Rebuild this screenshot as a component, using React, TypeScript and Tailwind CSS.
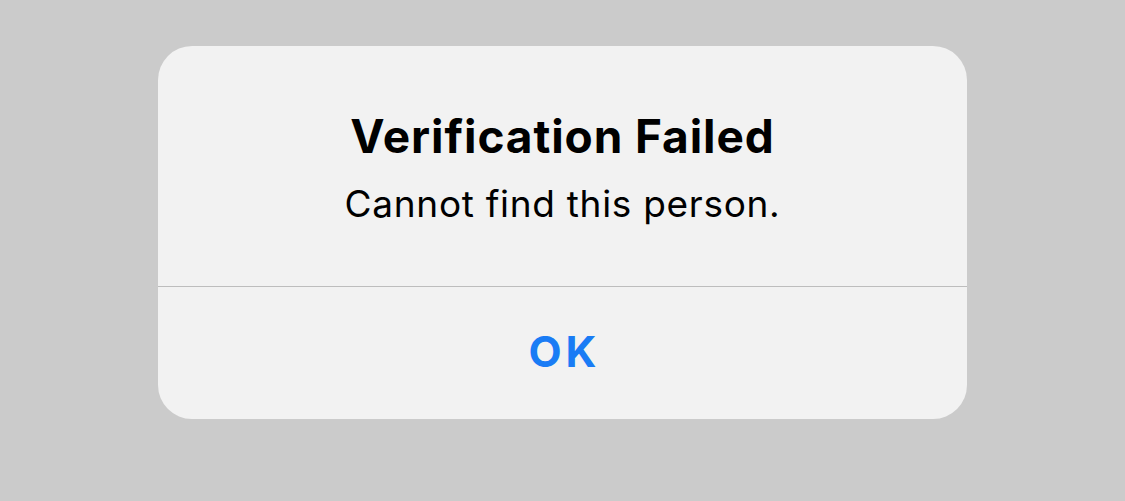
export default function App() {
  return (
    <div className="min-h-screen w-full bg-[#cbcbcb] flex justify-center pt-[46px]" style={{ fontFamily: 'Inter, "Noto Sans", sans-serif' }}>
      <div className="w-[809px] h-[373px] bg-[#f2f2f2] rounded-[34px] flex flex-col overflow-hidden">
        {/* Message */}
        <div className="h-[240px] flex flex-col items-center justify-center">
          <h1 className="mt-[2px] text-[46px] leading-none font-bold tracking-[0.9px] text-black">Verification Failed</h1>
          <p className="mt-[26px] text-[37px] leading-none tracking-[0.7px] text-black">Cannot find this person.</p>
        </div>
        <div className="h-px bg-[#bdbdbd]" />
        {/* Action */}
        <button className="flex-1 flex items-center justify-center pb-[3px] pl-[4px] text-[43px] leading-none font-bold tracking-[4px] text-[#1a7cf5]">
          OK
        </button>
      </div>
    </div>
  );
}
